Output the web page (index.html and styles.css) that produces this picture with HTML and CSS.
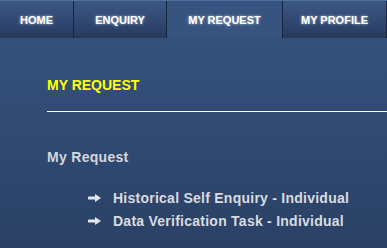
FILE: index.html
```html
<!DOCTYPE html>
<html lang="en">
<head>
  <meta charset="UTF-8" />
  <title>My Request</title>
  <link rel="stylesheet" href="styles.css">
</head>
<body>
  <ul class="nav">
    <li class="nav-home"><a href="#">HOME</a></li>
    <li class="nav-enquiry"><a href="#">ENQUIRY</a></li>
    <li class="nav-request active"><a href="#">MY REQUEST</a></li>
    <li class="nav-profile"><a href="#">MY PROFILE</a></li>
  </ul>

  <div class="content">
    <h2 class="page-title">MY REQUEST</h2>
    <hr class="divider" />

    <h3 class="section-title">My Request</h3>
    <ul class="links">
      <li>
        <svg class="arrow" width="13" height="8" viewBox="0 0 13 8"><path d="M1 2.5h6V0l6 4-6 4V5.5H1a1.5 1.5 0 0 1 0-3z" /></svg>
        <a href="#">Historical Self Enquiry - Individual</a>
      </li>
      <li>
        <svg class="arrow" width="13" height="8" viewBox="0 0 13 8"><path d="M1 2.5h6V0l6 4-6 4V5.5H1a1.5 1.5 0 0 1 0-3z" /></svg>
        <a href="#">Data Verification Task - Individual</a>
      </li>
    </ul>
  </div>
</body>
</html>
```

FILE: styles.css
```css
html, body {
  margin: 0;
  height: 100%;
}

body {
  font-family: "Liberation Sans", Arial, sans-serif;
  background: linear-gradient(to bottom, #36547f 0%, #2b4166 100%);
  overflow: hidden;
}

.nav {
  display: flex;
  margin: 0;
  padding: 0;
  list-style: none;
  height: 37px;
  border-top: 1px solid #4f6f9c;
}

.nav li {
  display: flex;
  align-items: center;
  justify-content: center;
  background: linear-gradient(to bottom, #3a5884 0%, #2f4770 60%, #263a5d 100%);
  border-right: 1px solid #16243c;
}

.nav a {
  color: #fff;
  text-decoration: none;
  font-weight: bold;
  font-size: 11px;
  text-shadow: 0 0 3px rgba(255, 255, 255, 0.7);
}

.nav-home { width: 73px; }
.nav-enquiry { width: 92px; }
.nav-request { width: 115px; }
.nav-profile { flex: 1; border-right: none; }

.nav li.active {
  background: #36547f;
  border-right-color: #16243c;
}

.content {
  padding: 39px 0 0 47px;
}

.page-title {
  margin: 0;
  color: #ffff00;
  font-size: 14px;
  font-weight: bold;
  line-height: 16px;
}

.divider {
  margin: 18px 0 0;
  border: none;
  border-top: 1px solid #ffffff;
  height: 0;
}

.section-title {
  margin: 37px 0 0;
  color: #d3d6dc;
  font-size: 14px;
  font-weight: bold;
  line-height: 16px;
  letter-spacing: 0.3px;
}

.links {
  margin: 21px 0 0;
  padding: 0 0 0 41px;
  list-style: none;
}

.links li {
  display: flex;
  align-items: center;
  height: 23px;
}

.arrow {
  margin-right: 12px;
  fill: #e3e5e9;
}

.links a {
  color: #d8dbe0;
  text-decoration: none;
  font-size: 14px;
  font-weight: bold;
  letter-spacing: 0.25px;
}
```
